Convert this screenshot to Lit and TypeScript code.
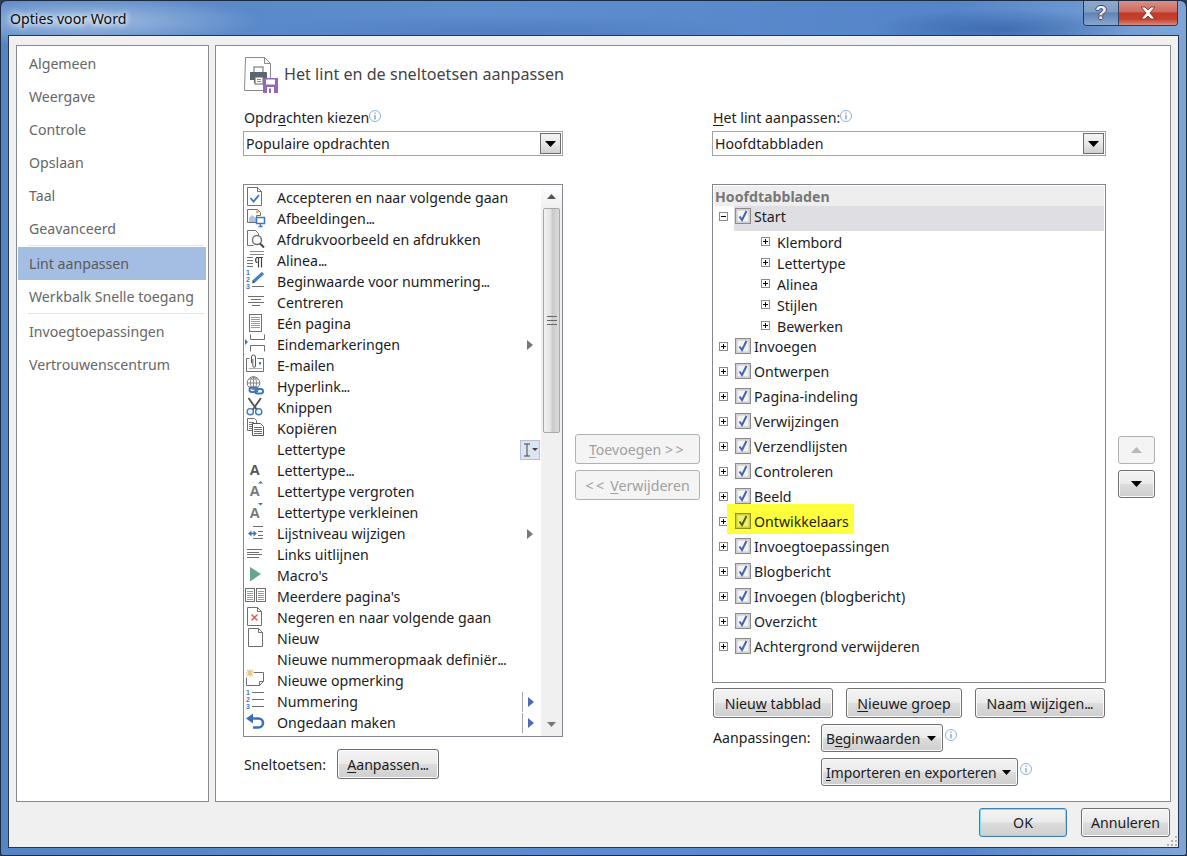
import { LitElement, html, css, svg } from "lit";
import { customElement } from "lit/decorators.js";

const G = "#6f6f6f";
const B = "#3f78b8";
const page = svg`<path d="M3.500 .5h10l4 4v14h-14z" fill="#fff" stroke="${G}"/><path d="M13.500 .5v4h4" fill="none" stroke="${G}"/>`;
const lines = (ys: number[], x1: number, x2: number, c = G) =>
  ys.map((y) => svg`<path d="M${x1} ${y + 0.5}H${x2}" stroke="${c}"/>`);
const digits = svg`<text x="2" y="4" class="mini">1</text><text x="2" y="11" class="mini">2</text><text x="2" y="18" class="mini">3</text>`;

const ICONS: Record<string, unknown> = {
  accept: svg`${page}<path d="M6.500 11l3 3.500 5.500-6.500" fill="none" stroke="${B}" stroke-width="1.900"/>`,
  images: svg`<path d="M3.500 1.500h10l3 3v3h-4v7h-9z" fill="#fff" stroke="${G}"/><path d="M5 14v-4l3-3 4 3v4z" fill="#a9c4e4"/><circle cx="13.300" cy="4" r="1.400" fill="#e9a84f"/><rect x="12.500" y="9.500" width="8" height="6" fill="#fff" stroke="${B}" stroke-width="1.500"/><path d="M14.500 18.500h4M16.500 15.500v3" stroke="${B}" stroke-width="1.300"/>`,
  preview: svg`<path d="M3.500 1.500h8l3 3v2M3.500 1.500v15h6" fill="none" stroke="${G}"/><circle cx="13" cy="11" r="4.500" fill="#fff" stroke="${G}" stroke-width="1.400"/><path d="M16 14.500l4 4" stroke="#444" stroke-width="2"/>`,
  para: svg`${lines([1, 4], 6, 20, "#888")}${lines([7, 10, 13, 16], 3, 9)}<path d="M12 7.500h7M13.500 7.500c-2.500 0-2.500 5 0 5M14.500 7.500v10M17.500 7.500v10" fill="none" stroke="#444" stroke-width="1.200"/>`,
  startnum: svg`${digits}${lines([15], 8, 20)}<path d="M9 11L19 2" stroke="#4a80c0" stroke-width="3.200"/><path d="M8 12.500l1-2.500 1.500 1.500z" fill="#333"/>`,
  center: svg`${lines([4], 4, 20)}${lines([7], 7, 17)}${lines([10], 4, 20)}${lines([13], 8, 16)}`,
  pagefull: svg`<rect x="5.500" y="1.500" width="12" height="17" fill="#fff" stroke="${G}"/>${lines([4, 6, 8, 10, 12, 14], 7, 16, "#999")}`,
  breaks: svg`<path d="M6.500 5.500v-5M6.500 5.500h14M20.500 5.500v-5M6.500 11.500h14M6.500 11.500v6M20.500 11.500v6" fill="none" stroke="${G}"/><path d="M1 5l3 3-3 3z" fill="${B}"/>`,
  mail: svg`<path d="M2.500 3.500v13h17v-13h-6M2.500 3.500h3" fill="#fff" stroke="${G}"/><path d="M7.500 8v-6a2 2 0 0 1 4 0v9a1.300 1.300 0 0 1-2.600 0v-7" fill="none" stroke="#555"/><rect x="15" y="7" width="2" height="2.500" fill="${B}"/>${lines([13], 5, 18, "#aaa")}`,
  link: svg`<circle cx="9.500" cy="7" r="6.300" fill="#fff" stroke="#777"/><path d="M3.500 7h12M9.500 .5v13M5 3h9M5 11h9" stroke="#888"/><ellipse cx="9.500" cy="7" rx="3" ry="6.300" fill="none" stroke="#888"/><rect x="5.500" y="11.500" width="8" height="4.500" rx="2.200" fill="none" stroke="${B}" stroke-width="2"/><rect x="11" y="13" width="8" height="4.500" rx="2.200" fill="none" stroke="${B}" stroke-width="2"/>`,
  cut: svg`<path d="M4.500 1L13 13M17 1L8.500 13" stroke="#555" stroke-width="1.900"/><circle cx="6.300" cy="14.700" r="3.100" fill="none" stroke="${B}" stroke-width="1.400"/><circle cx="14.700" cy="14.700" r="3.100" fill="none" stroke="${B}" stroke-width="1.400"/>`,
  copy: svg`<path d="M3.500 .5h7l2 2v10h-9z" fill="#fff" stroke="${G}"/>${lines([4, 6, 8, 10], 5, 10, "#777")}<path d="M8.500 5.500h8l3 3v9h-11z" fill="#fff" stroke="#555"/>${lines([9, 11, 13, 15], 10, 18, B)}`,
  fontA: svg`<text x="5.500" y="14.500" class="big">A</text>`,
  fontUp: svg`<text x="5.500" y="15" class="big lite">A</text><path d="M14 2.500L16.500 0 19 2.500z" fill="${B}"/>`,
  fontDown: svg`<text x="5.500" y="15.500" class="big lite">A</text><path d="M14 1l2.500 2.500L19 1z" fill="${B}"/>`,
  level: svg`${lines([3, 15], 9, 19)}${lines([8, 12], 14, 19)}<path d="M6 10.500h5" stroke="${B}" stroke-width="1.600"/><path d="M7.500 7.500l-3.500 3 3.500 3zM9.500 7.500l3.500 3-3.500 3z" fill="${B}"/>`,
  left: svg`${lines([5, 10], 3, 18)}${lines([8, 13], 3, 15)}`,
  macro: svg`<path d="M6 2l11 7-11 7.500z" fill="#65a594"/>`,
  multi: svg`<rect x="1.500" y="2.500" width="9" height="13" fill="#fff" stroke="${G}"/><rect x="12.500" y="2.500" width="9" height="13" fill="#fff" stroke="${G}"/>${lines([5, 7, 9, 11, 13], 3, 9, "#999")}${lines([5, 7, 9, 11, 13], 14, 20, "#999")}`,
  reject: svg`${page}<path d="M7.500 7.500l6 6M13.500 7.500l-6 6" stroke="#d8604a" stroke-width="1.400"/>`,
  newdoc: svg`<g transform="translate(1 0)">${page}</g>`,
  note: svg`<path d="M10 2.500h9.500v9l-4 4h-13v-8" fill="#fff" stroke="${G}"/><path d="M15.500 15.500v-4h4" fill="none" stroke="${G}"/><path d="M6 -1v8M2 3h8M3 0l6 6M9 0L3 6" stroke="#e8c48a" stroke-width="1.200"/>`,
  numbers: svg`${digits}${lines([1, 8, 15], 8, 20)}`,
  undo: svg`<path d="M8 6.500h6.500a4.500 4.500 0 0 1 0 9H9" fill="none" stroke="#3d6fb5" stroke-width="2.600"/><path d="M9 1.500L2 6.500l7 5z" fill="#3d6fb5"/>`,
};

const LEFT: { t: string; i?: string; tail?: string }[] = [
  { t: "Accepteren en naar volgende gaan", i: "accept" },
  { t: "Afbeeldingen...", i: "images" },
  { t: "Afdrukvoorbeeld en afdrukken", i: "preview" },
  { t: "Alinea...", i: "para" },
  { t: "Beginwaarde voor nummering...", i: "startnum" },
  { t: "Centreren", i: "center" },
  { t: "Eén pagina", i: "pagefull" },
  { t: "Eindemarkeringen", i: "breaks", tail: "sub" },
  { t: "E-mailen", i: "mail" },
  { t: "Hyperlink...", i: "link" },
  { t: "Knippen", i: "cut" },
  { t: "Kopiëren", i: "copy" },
  { t: "Lettertype", tail: "font" },
  { t: "Lettertype...", i: "fontA" },
  { t: "Lettertype vergroten", i: "fontUp" },
  { t: "Lettertype verkleinen", i: "fontDown" },
  { t: "Lijstniveau wijzigen", i: "level", tail: "sub" },
  { t: "Links uitlijnen", i: "left" },
  { t: "Macro's", i: "macro" },
  { t: "Meerdere pagina's", i: "multi" },
  { t: "Negeren en naar volgende gaan", i: "reject" },
  { t: "Nieuw", i: "newdoc" },
  { t: "Nieuwe nummeropmaak definiër..." },
  { t: "Nieuwe opmerking", i: "note" },
  { t: "Nummering", i: "numbers", tail: "split" },
  { t: "Ongedaan maken", i: "undo", tail: "split" },
];

const TOP = [
  "Invoegen", "Ontwerpen", "Pagina-indeling", "Verwijzingen", "Verzendlijsten", "Controleren",
  "Beeld", "Ontwikkelaars", "Invoegtoepassingen", "Blogbericht", "Invoegen (blogbericht)", "Overzicht",
  "Achtergrond verwijderen",
];
const CHILDREN = ["Klembord", "Lettertype", "Alinea", "Stijlen", "Bewerken"];

const dots = (t: string) =>
  t.endsWith("...") ? html`${t.slice(0, -3)}<span class="dots">...</span>` : t;
const info = () => html`<svg class="info" width="14" height="14" viewBox="0 0 14 14"><circle cx="7" cy="7" r="5.500" fill="#fff" stroke="#8fb0dc"/><path d="M7 6v4.500" stroke="#5f8cc8" stroke-width="1.100"/><path d="M7 3.500v1.200" stroke="#5f8cc8" stroke-width="1.100"/></svg>`;
const caret = (c = "#000") => html`<svg class="caret" width="11" height="6" viewBox="0 0 11 6"><path d="M0 0h11L5.500 6z" fill="${c}"/></svg>`;
const expander = (open = false) => html`<svg class="exp" width="9" height="9" viewBox="0 0 9 9"><rect x=".5" y=".5" width="8" height="8" fill="#fff" stroke="#8a8a8a"/><path d="M2 4.500h5" stroke="#000"/>${open ? "" : svg`<path d="M4.500 2v5" stroke="#000"/>`}</svg>`;
const check = (hl = false) => html`<svg class="chk" width="16" height="16" viewBox="0 0 16 16"><rect x=".5" y=".5" width="15" height="15" fill="${hl ? "#c8c830" : "#d9d9dc"}" stroke="${hl ? "#8f8f20" : "#8b8b8b"}"/><rect x="2" y="2" width="12" height="12" fill="${hl ? "#f0f070" : "#f4f4f6"}" stroke="${hl ? "#d2d240" : "#c8c8cc"}"/><path d="M4.500 8.500l2.500 3.500 4.500-9" fill="none" stroke="${hl ? "#55600c" : "#4664b4"}" stroke-width="2"/></svg>`;

@customElement("app-root")
export class AppRoot extends LitElement {
  static styles = css`
    :host { display: block; width: 1187px; height: 856px; font-family: "Noto Sans", sans-serif; font-size: 14.150px; color: #1c1c1c; background: #2c3b50; }
    * { box-sizing: border-box; }
    u { text-underline-offset: 2px; }
    .dots { letter-spacing: -1px; margin-right: 1px; }
    .window { width: 1187px; height: 856px; display: flex; flex-direction: column; padding: 0 7px 7px; border: 1px solid #1d2b3f; border-radius: 7px 7px 3px 3px;
      background:
        radial-gradient(ellipse 180px 26px at 80px 20px, rgba(190,210,235,.75), transparent),
        radial-gradient(ellipse 130px 20px at 1000px 28px, rgba(50,95,165,.7), transparent),
        radial-gradient(ellipse 250px 16px at 500px 30px, rgba(70,115,180,.6), transparent),
        linear-gradient(90deg, #5484c4, #5f8ecf 40%, #5485c8 80%, #7fa5d8);
      margin: 0; }
    .title { height: 34px; flex: none; display: flex; margin: 0 1px 0 0; }
    .title-text { padding-top: 7px; color: #0c0c0c; line-height: 22px; margin-left: 2px; text-shadow: 0 0 6px #fff, 0 0 6px #fff; }
    .caption { margin-left: auto; display: flex; height: 25px; border: 1px solid #2a3a55; border-top: 0; border-radius: 0 0 4px 4px; overflow: hidden; }
    .cap { display: flex; align-items: center; justify-content: center; }
    .help { width: 35px; background: linear-gradient(#8ea9cd, #7f9dc6 45%, #5f82b2 50%, #88a7cf); border-right: 1px solid #2f4567; font: bold 19px "Liberation Sans", sans-serif; color: #f2f2f2; text-shadow: -1px 0 #3c4a5e, 1px 0 #3c4a5e, 0 1px #3c4a5e, 0 -1px #3c4a5e; }
    .close { width: 58px; background: linear-gradient(#d89088, #cf6a5e 45%, #c03a28 50%, #c4402c 75%, #d98a7e); }
    .client { flex: 1; display: flex; flex-direction: column; background: #f0f0f0; border: 1px solid #26364f; padding: 9px 7px 0; min-height: 0; position: relative; }
    .panels { display: flex; gap: 6px; height: 757px; flex: none; }
    .nav { width: 193px; flex: none; background: #fff; border: 1px solid #868a91; padding: 1px 2px 1px 1px; color: #666; }
    .nav-item { height: 33px; line-height: 33px; padding-left: 11px; white-space: nowrap; }
    .nav-item.sel { background: #a3bde3; height: 33px; margin-top: 1px; color: #5a5a5a; }
    .nav-sep { height: 1px; margin: 0 2px 0 10px; background: #e4e4e4; }
    .nav-sep.two { margin-bottom: 1px; }
    .main { flex: 1; background: #fff; border: 1px solid #868a91; padding: 0 0 0 27px; }
    .head { height: 60px; display: flex; }
    .head svg { margin: 9px 0 0 1px; flex: none; }
    .head-title { font-size: 16.150px; color: #444; line-height: 24px; margin: 16px 0 0 5px; }
    .cols { display: flex; }
    .col-l { width: 320px; flex: none; }
    .col-m { width: 149px; flex: none; padding: 328px 0 0 12px; display: flex; flex-direction: column; gap: 6px; }
    .col-r { width: 394px; flex: none; }
    .col-a { padding: 330px 0 0 12px; display: flex; flex-direction: column; gap: 6px; }
    .lab { height: 25px; line-height: 24px; padding-left: 1px; display: flex; }
    .lab .info { margin: 3px 0 0 -1px; }
    .combo { height: 25px; border: 1px solid #a3a3a3; display: flex; align-items: center; padding: 0 1px 0 2px; margin-bottom: 28px; }
    .combo-arrow { margin-left: auto; width: 21px; height: 21px; border: 1px solid #6e6e6e; background: linear-gradient(#f4f4f4, #e8e8e8 50%, #d0d0d0); display: flex; align-items: center; justify-content: center; }
    .list { border: 1px solid #828790; background: #fff; }
    .list-l { height: 553px; display: flex; padding-top: 2px; }
    .rows { width: 297px; flex: none; }
    .row { height: 21px; display: flex; align-items: center; }
    .ic { width: 23px; height: 21px; flex: none; margin-right: 10px; overflow: visible; }
    .mini { font: bold 7px "Liberation Sans", sans-serif; fill: #3f78b8; }
    .big { font: bold 14.500px "Liberation Sans", sans-serif; fill: #555; }
    .big.lite { fill: #777; }
    .tail { margin-left: auto; width: 22px; height: 21px; display: flex; align-items: center; flex: none; }
    .sub { margin-left: 8px; }
    .split { border-left: 1px solid #a0a8b8; height: 20px; padding-left: 5px; display: flex; align-items: center; margin-left: 3px; }
    .fontbox { width: 20px; height: 20px; margin-left: 1px; border: 1px solid #b4c2d8; background: #dde5f0; display: flex; align-items: center; justify-content: center; gap: 1px; }
    .scroll { flex: 1; margin-top: -2px; background: #f0f0f0; display: flex; flex-direction: column; }
    .scroll-btn { height: 23px; flex: none; display: flex; align-items: center; justify-content: center; background: linear-gradient(#fff, #f0f0f0); }
    .scroll-btn.down { margin-top: auto; background: #f0f0f0; }
    .thumb { height: 225px; margin: 0 2px 0 2px; border: 1px solid #a8a8a8; border-radius: 2px; background: linear-gradient(90deg, #f2f2f2, #e2e2e2 45%, #c9c9c9 55%, #dcdcdc); display: flex; align-items: center; justify-content: center; flex: none; }
    .list-r { height: 499px; padding: 1px; }
    .tree-head { height: 20px; line-height: 22px; background: #eee; padding-left: 1px; font-weight: 700; color: #777; }
    .top { height: 25px; display: flex; align-items: flex-start; padding: 2px 0 0 5px; }
    .top .exp { margin: 4px 7px 0 0; flex: none; }
    .top .chk { flex: none; margin-right: 3px; }
    .top .text { line-height: 20px; margin-top: -1px; }
    .top.start { padding-left: 0; }
    .start .exp { margin-left: 5px; margin-right: 6px; }
    .start-sel { flex: 1; height: 25px; margin-top: -2px; background: #dfdfe3; padding: 2px 0 0 1px; display: flex; align-items: flex-start; }
    .kids { padding-top: 1px; margin-bottom: -1px; }
    .kid { height: 21px; display: flex; align-items: center; padding-left: 47px; }
    .kid .exp { margin: -3px 7px 0 0; }
    .hl { display: flex; background: #ffff3c; margin: -9px 0 0 -8px; padding: 9px 5px 0 8px; height: 30px; }
    .btn { display: flex; align-items: center; justify-content: center; height: 30px; border: 1px solid #707070; border-radius: 3px; box-shadow: inset 0 0 0 1px #fbfbfb; background: linear-gradient(#f4f4f4, #ebebeb 48%, #dcdcdc 52%, #cfcfcf); color: #1c1c1c; white-space: nowrap; }
    .btn.off { background: #f4f4f4; border-color: #adb2b5; color: #a0a0a0; box-shadow: none; }
    .sm { height: 28px; }
    .mid { width: 125px; }
    .wide { letter-spacing: 2.500px; }
    .arrow { width: 37px; height: 28px; }
    .btn-row { display: flex; margin: 5px 0 0 1px; }
    .shortcut { display: flex; align-items: center; margin-top: 12px; height: 30px; padding-left: 1px; }
    .shortcut .btn { margin-left: 11px; width: 102px; }
    .custom { display: flex; margin: 6px 0 0 1px; align-items: flex-start; }
    .custom.indent { padding-left: 108px; }
    .custom .lbl { line-height: 28px; width: 108px; flex: none; }
    .drop { justify-content: space-between; padding: 0 6px 0 4px; font-size: 13.850px; }
    .drop .caret { width: 9px; height: 5px; }
    .w-begin { width: 122px; }
    .w-imp { width: 197px; }
    .custom .info { margin: 4px 0 0 1px; }
    .foot { display: flex; justify-content: flex-end; padding: 6px 1px 0 0; }
    .ok { width: 88px; height: 29px; border-color: #3c7fb1; box-shadow: inset 0 0 0 1px #7fe0f5; margin-right: 14px; }
    .cancel { width: 89px; height: 29px; }
    .grip { position: absolute; right: 0; bottom: 0; }
  `;

  render() {
    return html`<div class="window">
      <div class="title">
        <div class="title-text">Opties voor Word</div>
        <div class="caption">
          <div class="cap help">?</div>
          <div class="cap close"><svg width="20" height="14" viewBox="0 0 20 14"><path d="M3 1h4l3 3 3-3h4l-5 6 5 6h-4l-3-3-3 3H3l5-6z" fill="#f6f6f6" stroke="#6e2a20" stroke-width=".8"/></svg></div>
        </div>
      </div>
      <div class="client">
        <div class="panels">
          <div class="nav">
            ${["Algemeen", "Weergave", "Controle", "Opslaan", "Taal", "Geavanceerd"].map((t) => html`<div class="nav-item">${t}</div>`)}
            <div class="nav-sep"></div>
            <div class="nav-item sel">Lint aanpassen</div>
            <div class="nav-item">Werkbalk Snelle toegang</div>
            <div class="nav-sep two"></div>
            <div class="nav-item">Invoegtoepassingen</div>
            <div class="nav-item">Vertrouwenscentrum</div>
          </div>
          <div class="main">
            <div class="head">
              <svg width="35" height="40" viewBox="0 0 35 40">
                <path d="M1.500 2.500h19l6 6v27h-26z" fill="#fff" stroke="#8a8a8a"/><path d="M20.500 2.500v6h6" fill="none" stroke="#8a8a8a"/>
                <rect x="10" y="12" width="9" height="6" fill="#fff" stroke="#666"/>
                <path d="M6 17h16a1 1 0 0 1 1 1v7h-3v3H10v-3H6z" fill="#5b6670"/>
                <rect x="11" y="22" width="8" height="7" fill="#fff" stroke="#666"/><path d="M13 24.500h4M13 26.500h4" stroke="#888"/>
                <rect x="19" y="23" width="15" height="15" fill="#9268b8"/><rect x="22" y="24.500" width="9" height="5" fill="#fff"/><rect x="23" y="32" width="7" height="6" fill="#fff"/><rect x="25" y="33.500" width="2" height="4.500" fill="#9268b8"/>
              </svg>
              <div class="head-title">Het lint en de sneltoetsen aanpassen</div>
            </div>
            <div class="cols">
              <div class="col-l">
                <div class="lab"><span>Opdr<u>a</u>chten kiezen</span>${info()}</div>
                <div class="combo"><span>Populaire opdrachten</span><div class="combo-arrow">${caret()}</div></div>
                <div class="list list-l">
                  <div class="rows">${LEFT.map((r) => this.leftRow(r))}</div>
                  <div class="scroll">
                    <div class="scroll-btn"><svg width="9" height="5" viewBox="0 0 9 5"><path d="M0 5h9L4.500 0z" fill="#555"/></svg></div>
                    <div class="thumb"><svg width="10" height="9" viewBox="0 0 10 9"><path d="M0 .5h10M0 4.500h10M0 8.500h10" stroke="#666"/></svg></div>
                    <div class="scroll-btn down"><svg width="9" height="5" viewBox="0 0 9 5"><path d="M0 0h9L4.500 5z" fill="#777"/></svg></div>
                  </div>
                </div>
                <div class="shortcut"><span>Sneltoetsen:</span><div class="btn"><span><u>A</u>anpassen<span class="dots">...</span></span></div></div>
              </div>
              <div class="col-m">
                <div class="btn off mid"><span><u>T</u>oevoegen <span class="wide">&gt;&gt;</span></span></div>
                <div class="btn off mid"><span><span class="wide">&lt;&lt;</span> <u>V</u>erwijderen</span></div>
              </div>
              <div class="col-r">
                <div class="lab"><span><u>H</u>et lint aanpassen:</span>${info()}</div>
                <div class="combo"><span>Hoofdtabbladen</span><div class="combo-arrow">${caret()}</div></div>
                <div class="list list-r">
                  <div class="tree-head">Hoofdtabbladen</div>
                  <div class="top start">${expander(true)}<div class="start-sel">${check()}<span class="text">Start</span></div></div>
                  <div class="kids">${CHILDREN.map((c) => html`<div class="kid">${expander()}<span>${c}</span></div>`)}</div>
                  ${TOP.map((t) => t === "Ontwikkelaars"
                    ? html`<div class="top">${expander()}<div class="hl">${check(true)}<span class="text">${t}</span></div></div>`
                    : html`<div class="top">${expander()}${check()}<span class="text">${t}</span></div>`)}
                </div>
                <div class="btn-row">
                  <div class="btn" style="width:120px"><span>Nieu<u>w</u> tabblad</span></div>
                  <div class="btn" style="width:116px;margin-left:13px"><span><u>N</u>ieuwe groep</span></div>
                  <div class="btn" style="width:130px;margin-left:13px"><span>Naa<u>m</u> wijzigen<span class="dots">...</span></span></div>
                </div>
                <div class="custom">
                  <span class="lbl">Aanpassingen:</span>
                  <div class="btn sm drop w-begin"><span>B<u>e</u>ginwaarden</span>${caret()}</div>
                  ${info()}
                </div>
                <div class="custom indent">
                  <div class="btn sm drop w-imp"><span><u>I</u>mporteren en exporteren</span>${caret()}</div>
                  ${info()}
                </div>
              </div>
              <div class="col-a">
                <div class="btn off arrow"><svg width="11" height="6" viewBox="0 0 11 6"><path d="M0 6h11L5.500 0z" fill="#b8b8b8"/></svg></div>
                <div class="btn arrow">${caret()}</div>
              </div>
            </div>
          </div>
        </div>
        <div class="foot">
          <div class="btn ok">OK</div>
          <div class="btn cancel">Annuleren</div>
        </div>
        <svg class="grip" width="12" height="12" viewBox="0 0 12 12"><path d="M9 1h2v2H9zM5 5h2v2H5zM9 5h2v2H9zM1 9h2v2H1zM5 9h2v2H5zM9 9h2v2H9z" fill="#b4b4b4"/></svg>
      </div>
    </div>`;
  }

  leftRow(r: { t: string; i?: string; tail?: string }) {
    return html`<div class="row">
      <svg class="ic" viewBox="0 0 23 21">${r.i ? ICONS[r.i] : ""}</svg>
      <span>${dots(r.t)}</span>
      ${r.tail ? html`<div class="tail">${this.tail(r.tail)}</div>` : ""}
    </div>`;
  }

  tail(kind: string) {
    if (kind === "sub") return html`<svg class="sub" width="6" height="10" viewBox="0 0 6 10"><path d="M0 0l6 5-6 5z" fill="#777"/></svg>`;
    if (kind === "split") return html`<div class="split"><svg width="6" height="10" viewBox="0 0 6 10"><path d="M0 0l6 5-6 5z" fill="#4b6cb0"/></svg></div>`;
    return html`<div class="fontbox"><svg width="8" height="14" viewBox="0 0 8 14"><path d="M1 1h6M1 13h6M4 1v12" stroke="#444"/></svg><svg width="6" height="3" viewBox="0 0 6 3"><path d="M0 0h6L3 3z" fill="#444"/></svg></div>`;
  }
}
